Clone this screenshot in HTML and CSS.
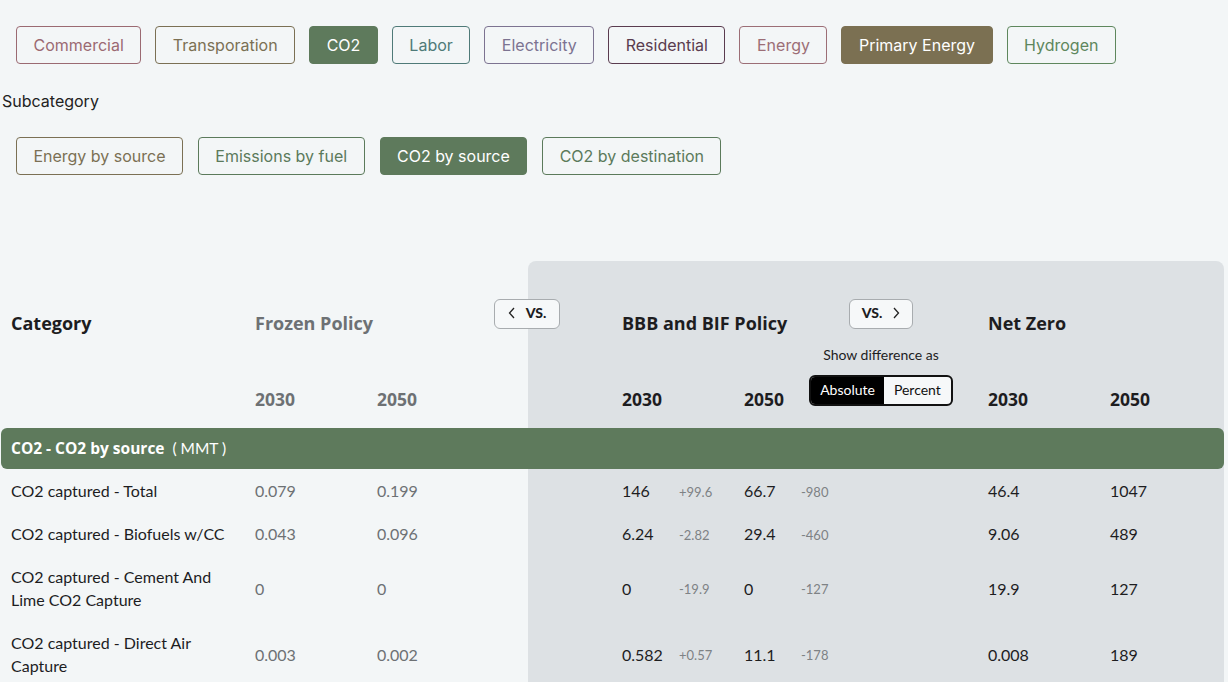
FILE: index.html
```html
<!DOCTYPE html>
<html lang="en">
<head>
<meta charset="utf-8">
<title>CO2 by source</title>
<link rel="stylesheet" href="styles.css">
</head>
<body>
<nav class="chips chips-main">
  <button class="chip chip-commercial">Commercial</button>
  <button class="chip chip-transport">Transporation</button>
  <button class="chip chip-co2 is-active">CO2</button>
  <button class="chip chip-labor">Labor</button>
  <button class="chip chip-electricity">Electricity</button>
  <button class="chip chip-residential">Residential</button>
  <button class="chip chip-energy">Energy</button>
  <button class="chip chip-primary is-active">Primary Energy</button>
  <button class="chip chip-hydrogen">Hydrogen</button>
</nav>
<div class="sub-label">Subcategory</div>
<nav class="chips chips-sub">
  <button class="chip chip-transport">Energy by source</button>
  <button class="chip chip-co2">Emissions by fuel</button>
  <button class="chip chip-co2 is-active">CO2 by source</button>
  <button class="chip chip-co2">CO2 by destination</button>
</nav>

<section class="table">
  <div class="panel"></div>

  <div class="h-title h-cat">Category</div>
  <div class="h-title h-frozen">Frozen Policy</div>
  <button class="vs vs-left"><svg width="8" height="12" viewBox="0 0 8 12"><path d="M6 1 1.5 6 6 11" fill="none" stroke="#222" stroke-width="1.3"/></svg><span>VS.</span></button>
  <div class="h-title h-bbb">BBB and BIF Policy</div>
  <div class="diffctl">
    <button class="vs vs-right"><span>VS.</span><svg width="8" height="12" viewBox="0 0 8 12"><path d="M2 1 6.5 6 2 11" fill="none" stroke="#222" stroke-width="1.3"/></svg></button>
    <div class="diff-label">Show difference as</div>
    <div class="toggle"><span class="tog tog-on">Absolute</span><span class="tog">Percent</span></div>
  </div>
  <div class="h-title h-nz">Net Zero</div>

  <div class="year y-f30 muted">2030</div>
  <div class="year y-f50 muted">2050</div>
  <div class="year y-b30">2030</div>
  <div class="year y-b50">2050</div>
  <div class="year y-n30">2030</div>
  <div class="year y-n50">2050</div>

  <div class="band"><b>CO2 - CO2 by source</b>&nbsp; ( MMT )</div>

  <div class="row row-1">
    <div class="name">CO2 captured - Total</div>
    <div class="val muted">0.079</div><div class="val muted">0.199</div>
    <div class="val">146</div><div class="dif">+99.6</div>
    <div class="val">66.7</div><div class="dif">-980</div>
    <div class="val">46.4</div><div class="val">1047</div>
  </div>
  <div class="row row-2">
    <div class="name">CO2 captured - Biofuels w/CC</div>
    <div class="val muted">0.043</div><div class="val muted">0.096</div>
    <div class="val">6.24</div><div class="dif">-2.82</div>
    <div class="val">29.4</div><div class="dif">-460</div>
    <div class="val">9.06</div><div class="val">489</div>
  </div>
  <div class="row row-3">
    <div class="name">CO2 captured - Cement And Lime CO2 Capture</div>
    <div class="val muted">0</div><div class="val muted">0</div>
    <div class="val">0</div><div class="dif">-19.9</div>
    <div class="val">0</div><div class="dif">-127</div>
    <div class="val">19.9</div><div class="val">127</div>
  </div>
  <div class="row row-4">
    <div class="name">CO2 captured - Direct Air Capture</div>
    <div class="val muted">0.003</div><div class="val muted">0.002</div>
    <div class="val">0.582</div><div class="dif">+0.57</div>
    <div class="val">11.1</div><div class="dif">-178</div>
    <div class="val">0.008</div><div class="val">189</div>
  </div>
</section>
</body>
</html>
```

FILE: styles.css
```css
* { box-sizing: border-box; }
html, body { margin: 0; padding: 0; }
body {
  background: #f3f6f7;
  color: #1d1d1f;
  font-family: Inter, "Noto Sans", sans-serif;
  overflow: hidden;
  width: 1228px;
  height: 682px;
}

.chips {
  display: flex;
  gap: 14px;
  padding-left: 16px;
}
.chips-main { margin-top: 26px; }
.chips-sub { margin-top: 26px; gap: 15px; }

.chip {
  height: 38px;
  padding: 0 16.5px;
  border: 1px solid currentColor;
  border-radius: 4px;
  background: transparent;
  font-family: Inter, "Noto Sans", sans-serif;
  font-size: 16px;
  line-height: 20px;
  cursor: pointer;
}
.chips-sub .chip { padding: 0 16.4px; }
.chip-commercial { color: #9b6a72; }
.chip-transport { color: #7b7054; }
.chip-co2 { color: #5b7a5b; }
.chip-labor { color: #4f7a78; }
.chip-electricity { color: #7c7391; }
.chip-residential { color: #5a3c4f; }
.chip-energy { color: #9c6e76; }
.chip-primary { color: #7b7052; }
.chip-hydrogen { color: #5e875d; }
.chip.chip-co2.is-active { background: #5e7a5c; border-color: #5e7a5c; color: #fff; }
.chip.chip-primary.is-active { background: #7b7052; border-color: #7b7052; color: #fff; }

.sub-label {
  margin-top: 27px;
  padding-left: 2px;
  font-size: 16px;
  line-height: 20px;
  color: #222;
}

/* ---------- table ---------- */
.table {
  margin-top: 86px;
  width: 1224px;
  display: grid;
  grid-template-columns: 255px 122px 151px 94px 57px 65px 57px 187px 122px 114px;
  grid-template-rows: 38px 46px 22px 61px 41px auto auto auto auto;
  font-family: Lato, "Noto Sans", sans-serif;
}
.panel {
  grid-column: 4 / 11;
  grid-row: 1 / 10;
  background: #dde1e4;
  border-radius: 8px 8px 0 0;
}

.h-title {
  grid-row: 2;
  align-self: center;
  font-family: "Open Sans", "Noto Sans", sans-serif;
  font-weight: 700;
  font-size: 18px;
  line-height: 22px;
  padding-top: 2px;
}
.h-cat { grid-column: 1; padding-left: 11px; }
.h-frozen { grid-column: 2 / 4; color: #6d7174; }
.h-bbb { grid-column: 5 / 8; }
.h-nz { grid-column: 9 / 11; }

.vs {
  display: flex;
  align-items: center;
  justify-content: center;
  gap: 10px;
  height: 30px;
  border: 1px solid #a8acaf;
  border-radius: 6px;
  background: #f6f8f9;
  font-family: Lato, "Noto Sans", sans-serif;
  font-weight: 900;
  font-size: 14px;
  color: #1d1d1f;
  padding: 0 0 3px;
}
.vs-left {
  grid-column: 4;
  grid-row: 2;
  align-self: start;
  justify-self: start;
  margin-left: -34px;
  width: 66px;
}
.vs-right { width: 64px; }

.diffctl {
  grid-column: 8;
  grid-row: 2 / 5;
  width: 160px;
  display: flex;
  flex-direction: column;
  align-items: center;
}
.diff-label {
  margin-top: 18px;
  font-size: 14px;
  line-height: 16px;
  color: #1d1d1f;
}
.toggle {
  margin-top: 12px;
  display: flex;
  border: 2px solid #111;
  border-radius: 6px;
  overflow: hidden;
  height: 31px;
  background: #f6f8f9;
}
.tog {
  display: flex;
  align-items: center;
  padding: 0 10px 2px;
  font-size: 14px;
  color: #111;
}
.tog-on { background: #000; color: #fff; padding: 0 9px 2px 9px; }

.year {
  grid-row: 4;
  align-self: start;
  margin-top: 21px;
  font-family: "Open Sans", "Noto Sans", sans-serif;
  font-weight: 700;
  font-size: 17.5px;
  line-height: 22px;
}
.y-f30 { grid-column: 2; }
.y-f50 { grid-column: 3; }
.y-b30 { grid-column: 5 / 7; }
.y-b50 { grid-column: 7; }
.y-n30 { grid-column: 9; }
.y-n50 { grid-column: 10; }
.muted { color: #6d7174; }

.band {
  grid-column: 1 / 11;
  grid-row: 5;
  margin-left: 1px;
  background: #5e7a5c;
  border-radius: 6px;
  color: #fff;
  display: flex;
  align-items: center;
  padding: 0 10px 1px;
  font-size: 15.5px;
}
.band b {
  font-family: "Open Sans", "Noto Sans", sans-serif;
  font-weight: 700;
  font-size: 15.5px;
}

.row { display: contents; }
.row-1 > * { grid-row: 6; }
.row-2 > * { grid-row: 7; }
.row-3 > * { grid-row: 8; }
.row-4 > * { grid-row: 9; }
.row > :nth-child(1) { grid-column: 1; }
.row > :nth-child(2) { grid-column: 2; }
.row > :nth-child(3) { grid-column: 3; }
.row > :nth-child(4) { grid-column: 5; }
.row > :nth-child(5) { grid-column: 6; }
.row > :nth-child(6) { grid-column: 7; }
.row > :nth-child(7) { grid-column: 8; }
.row > :nth-child(8) { grid-column: 9; }
.row > :nth-child(9) { grid-column: 10; }

.name {
  padding: 10px 20px 10px 11px;
  font-size: 16px;
  line-height: 23px;
  color: #1d1d1f;
}
.val {
  align-self: center;
  font-size: 16px;
  line-height: 23px;
  white-space: nowrap;
}
.dif {
  align-self: center;
  font-size: 13px;
  line-height: 16px;
  padding-top: 2px;
  color: #7e8285;
  white-space: nowrap;
}
```
